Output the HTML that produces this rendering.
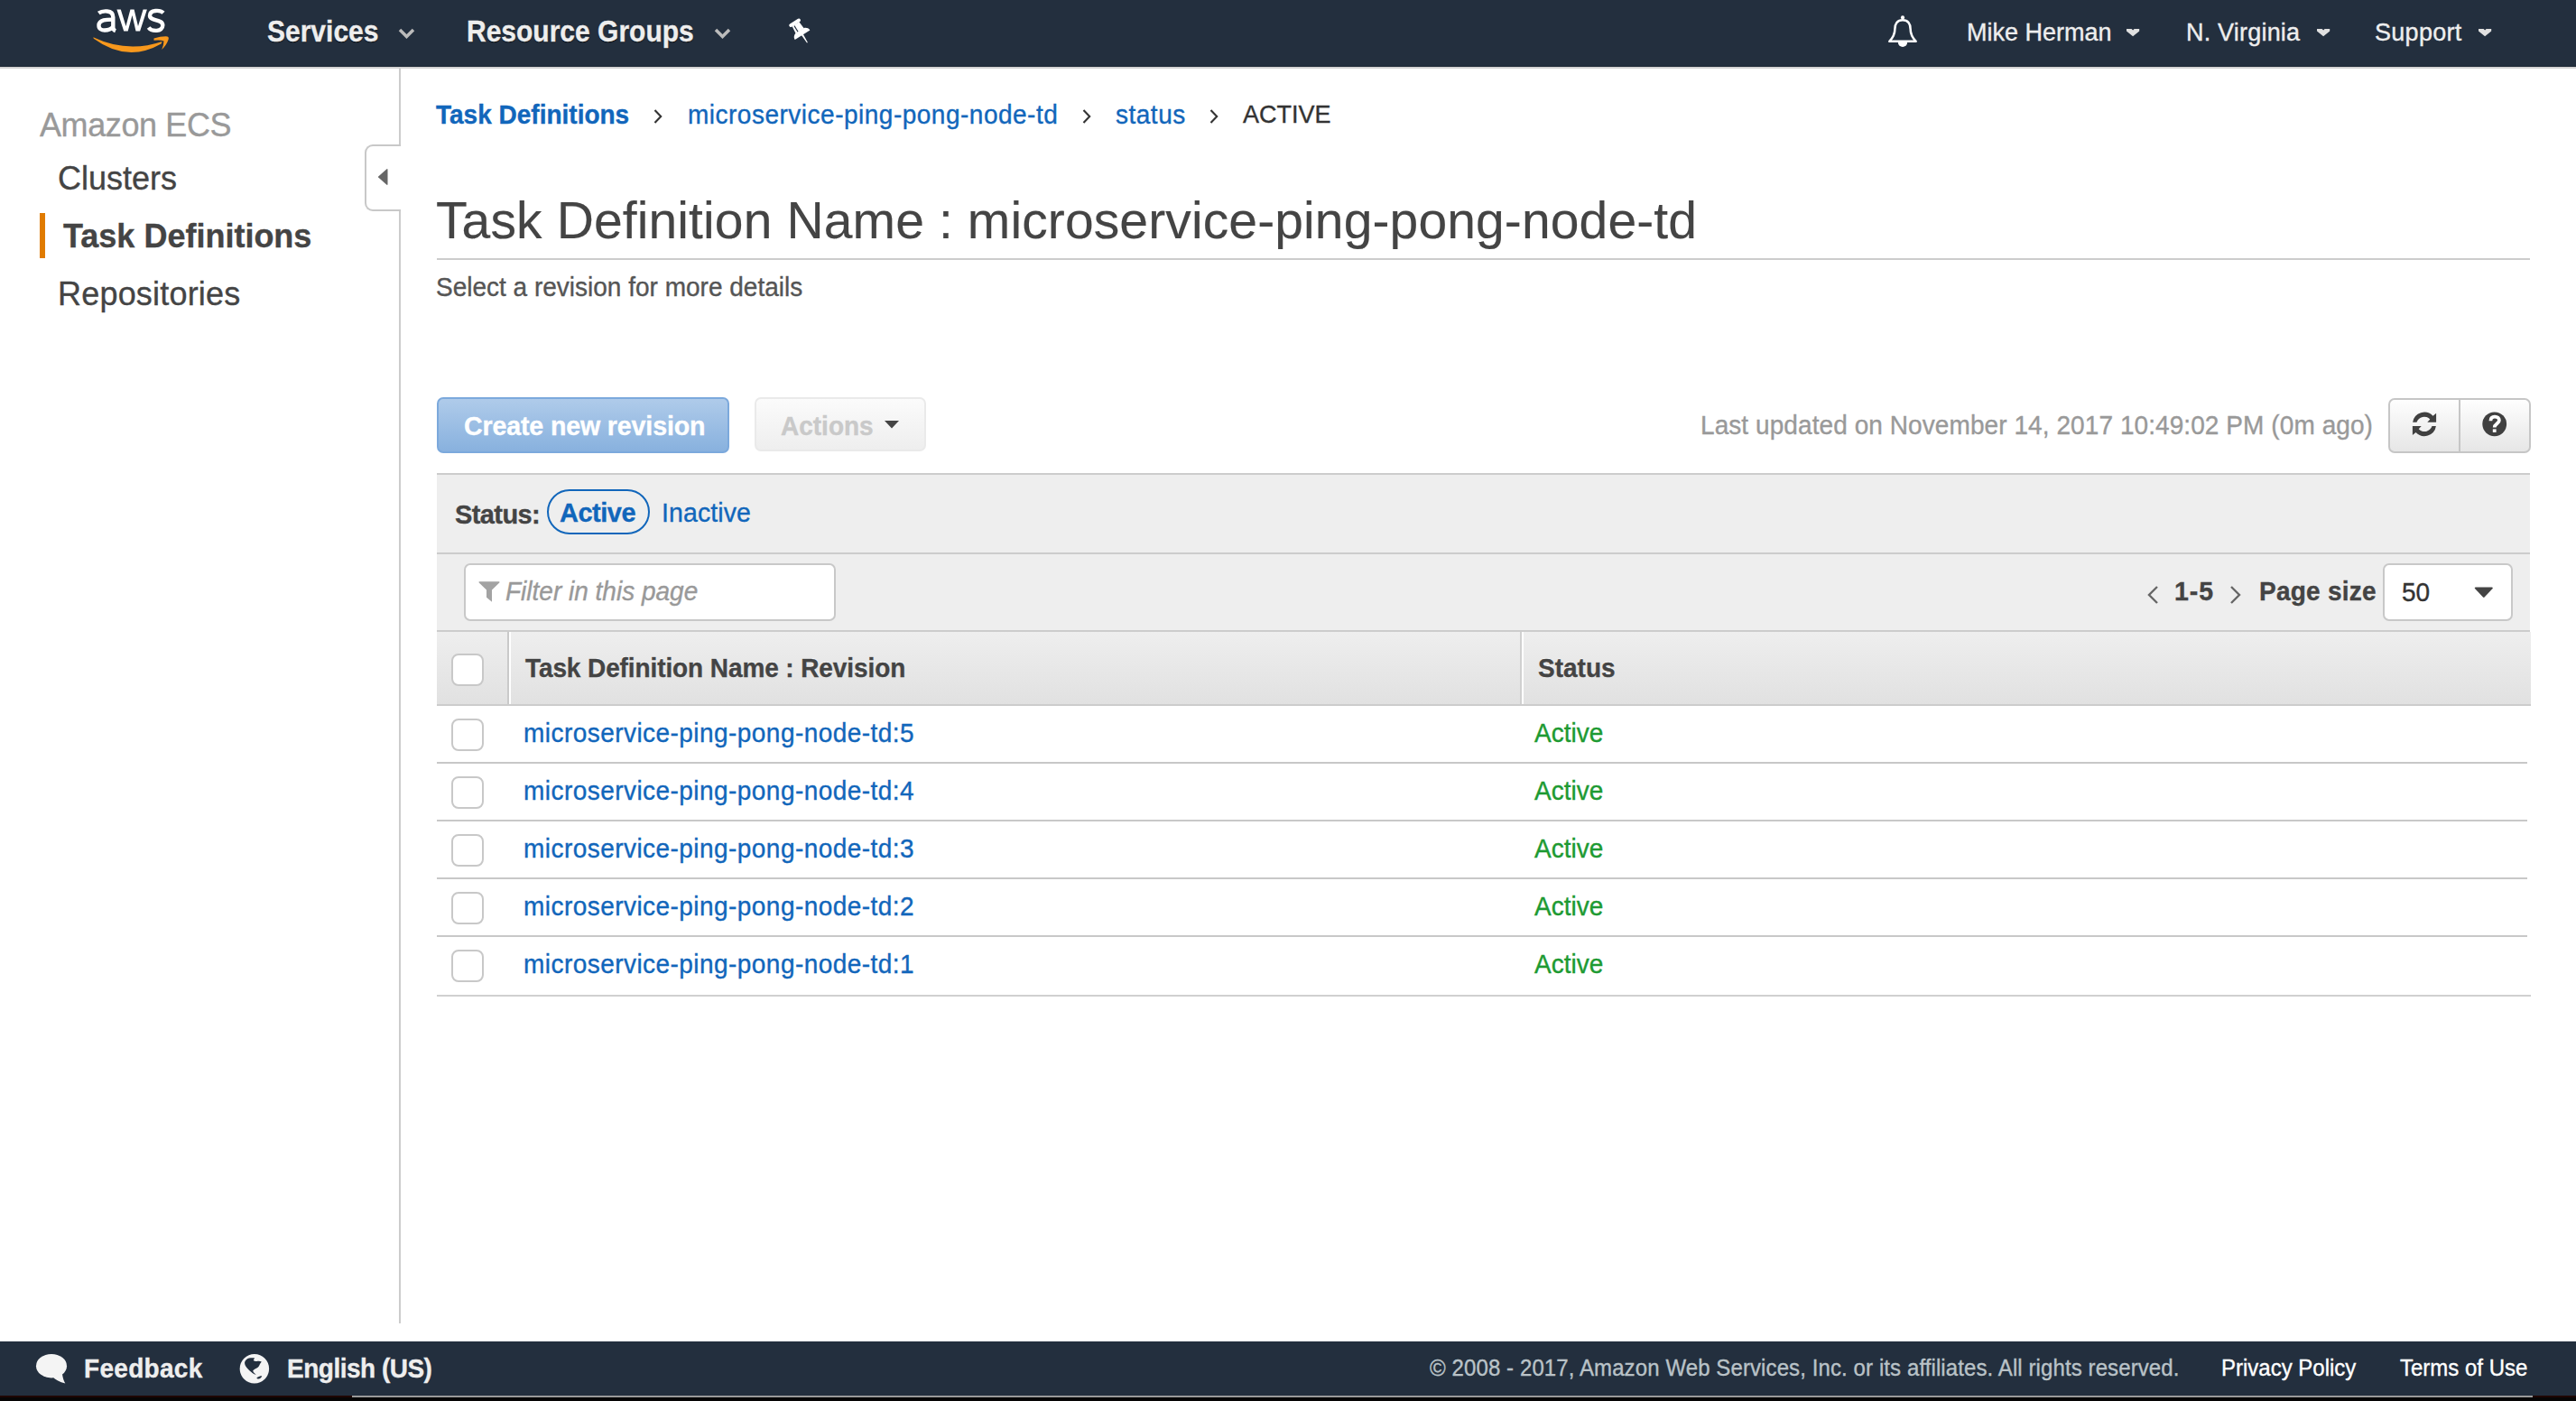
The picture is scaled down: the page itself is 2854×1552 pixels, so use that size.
<!DOCTYPE html>
<html>
<head>
<meta charset="utf-8">
<style>
*{box-sizing:border-box;margin:0;padding:0}
html,body{width:2854px;height:1552px;overflow:hidden;background:#fff}
body{position:relative;font-family:"Liberation Sans",sans-serif;color:#444}
.a{-webkit-text-stroke:0.35px currentColor}
.a{position:absolute;white-space:nowrap;line-height:1}
.b{font-weight:bold}
.s5{transform:scaleY(1.05);transform-origin:0 84.65%}
.s12{transform:scaleY(1.12);transform-origin:0 84.65%}
#hdr{position:absolute;left:0;top:0;width:2854px;height:74px;background:#232f3e;border-bottom:1px solid #1b2532}
#hdrline{position:absolute;left:0;top:74px;width:2854px;height:2px;background:#d2d2d2}
.nav{color:#eee;font-size:30px;font-weight:bold;text-shadow:0 1px 1px rgba(0,0,0,.9)}
.navr{color:#eee;font-size:27px}
#side{position:absolute;left:0;top:76px;width:444px;height:1390px;border-right:2px solid #ccc}
.sd{font-size:36px}
.bc{font-size:28px;color:#1166bb}
.chev{color:#444;font-size:28px}
#panel{position:absolute;left:484px;top:524px;width:2319px;height:176px;background:#eee;border-top:2px solid #ccc;border-bottom:2px solid #ccc}
#panelmid{position:absolute;left:484px;top:612px;width:2319px;height:2px;background:#ccc}
#thead{position:absolute;left:484px;top:700px;width:2320px;height:82px;background:linear-gradient(#eeeeee,#e1e1e1);border-bottom:2px solid #cccccc}
.cb{position:absolute;width:36px;height:36px;border:2px solid #c8c8c8;border-radius:8px;background:#fff}
.row{position:absolute;left:484px;width:2316px;height:64px;border-bottom:2px solid #ccc}
.lnk{font-size:28px;color:#1166bb;letter-spacing:0.45px}
.grn{font-size:28px;color:#1d9a32}
#ftr{position:absolute;left:0;top:1486px;width:2854px;height:60px;background:#232f3e}
#ftrstrip{position:absolute;left:0;top:1546px;width:2854px;height:6px;background:#060505}
#ftrline{position:absolute;left:0;top:1546px;width:2854px;height:2px;background:linear-gradient(to right,#1f0602 0,#1f0602 390px,#999 390px,#999 2806px,#1f0602 2806px)}
.ft{font-size:28px;color:#eee;font-weight:bold}
.fr{font-size:24px}
</style>
</head>
<body>
<div id="hdr"></div>
<div id="hdrline"></div>

<!-- header content -->
<svg class="a" style="left:96px;top:4px" width="100" height="60" viewBox="96 4 100 60">
  <g stroke="#fff" stroke-width="4.4" fill="none">
    <path d="M109.3 14.6 C113 11.8 125.3 10.2 125.3 19 L125.3 30.5 C125.3 32.5 126.3 33.5 128 34.2"/>
    <path d="M125.3 21.6 C119 21.6 109.5 21.4 109.5 28.4 C109.5 35.6 121.5 34.2 125.3 29.8"/>
    
    <path d="M181 14.3 C177.5 10.8 166 10.6 166 17.2 C166 24 180.3 20.8 180.3 28 C180.3 35.6 168 35.2 164.6 30.5"/>
  </g>
  <path d="M129.4 10.6 L133.8 10.6 L139.5 29 L144.4 10.6 L148.6 10.6 L153 29 L158.6 10.6 L162.9 10.6 L155.1 34.6 L150.5 34.6 L146.5 17 L141.7 34.6 L137.2 34.6 Z" fill="#fff"/>
  <path d="M103.3 41.3 Q141 59.1 179.6 46 L178.6 48.6 Q141 70.1 103.8 42.8 Z" fill="#f7981d"/>
  <path d="M170.5 42.4 Q179 40 185.5 40.4 Q187.5 41 186.5 44 Q184.5 50 179.2 55 Q181.5 49 181.5 45.5 Q178 44 170.5 44.8 Z" fill="#f7981d"/>
</svg>
<div class="s12 a nav" style="left:296px;top:21px">Services</div>
<svg class="a" style="left:441px;top:31px" width="19" height="12" viewBox="0 0 19 12"><path d="M2 2 L9.5 9.5 L17 2" stroke="#bbb" stroke-width="3.5" fill="none"/></svg>
<div class="s12 a nav" style="left:517px;top:21px">Resource Groups</div>
<svg class="a" style="left:791px;top:31px" width="19" height="12" viewBox="0 0 19 12"><path d="M2 2 L9.5 9.5 L17 2" stroke="#bbb" stroke-width="3.5" fill="none"/></svg>
<svg class="a" style="left:860px;top:10px" width="50" height="50" viewBox="860 10 50 50"><g transform="translate(879.6 23.6) rotate(-32)" fill="#fff">
<rect x="-7.2" y="0" width="14.4" height="3.8" rx="1.9"/>
<path d="M-4.6 3.5 L4.6 3.5 L5.4 12.6 L-5.4 12.6 Z"/>
<path d="M-5.6 12.2 L5.6 12.2 C8 13 9.8 15 9.8 17 L9.8 17.8 L-9.8 17.8 L-9.8 17 C-9.8 15 -8 13 -5.6 12.2 Z"/>
<path d="M-1.1 17.5 L1.1 17.5 L0.5 28 L-0.5 28 Z"/>
<rect x="-2.9" y="4.5" width="1.1" height="7.6" fill="#232f3e"/>
</g></svg>

<svg class="a" style="left:2091px;top:17px" width="34" height="36" viewBox="0 0 34 36"><path d="M17 5.2 C11 5.2 8.4 9.5 8.4 15 C8.4 21 6.5 24.5 2.3 28.8 L31.7 28.8 C27.5 24.5 25.6 21 25.6 15 C25.6 9.5 23 5.2 17 5.2 Z" stroke="#fff" stroke-width="2.5" fill="none" stroke-linejoin="round"/><path d="M11.9 30 L22.1 30 A5.1 5.1 0 0 1 11.9 30 Z" fill="#fff"/><circle cx="17" cy="2.4" r="2.1" fill="#fff"/></svg>
<div class="a navr" style="left:2179px;top:23px">Mike Herman</div>
<svg class="a" style="left:2354px;top:31px" width="17" height="10" viewBox="0 0 17 10"><path d="M2 1 L7.6 1 L9.1 2.6 L10.6 1 L16.2 1 L16.2 3.6 L9.1 9.2 L2 3.6 Z" fill="#e0e0e0"/></svg>
<div class="a navr" style="left:2422px;top:23px;letter-spacing:0.2px">N. Virginia</div>
<svg class="a" style="left:2565px;top:31px" width="17" height="10" viewBox="0 0 17 10"><path d="M2 1 L7.6 1 L9.1 2.6 L10.6 1 L16.2 1 L16.2 3.6 L9.1 9.2 L2 3.6 Z" fill="#e0e0e0"/></svg>
<div class="a navr" style="left:2631px;top:23px;letter-spacing:0.3px">Support</div>
<svg class="a" style="left:2744px;top:31px" width="17" height="10" viewBox="0 0 17 10"><path d="M2 1 L7.6 1 L9.1 2.6 L10.6 1 L16.2 1 L16.2 3.6 L9.1 9.2 L2 3.6 Z" fill="#e0e0e0"/></svg>

<!-- sidebar -->
<div id="side"></div>
<div class="a sd" style="left:44px;top:121px;color:#999;letter-spacing:-0.4px">Amazon ECS</div>
<div class="a sd" style="left:64px;top:180px;color:#444">Clusters</div>
<div class="a" style="left:44px;top:236px;width:6px;height:50px;background:#e07b00"></div>
<div class="a sd b" style="left:70px;top:244px;color:#444">Task Definitions</div>
<div class="a sd" style="left:64px;top:308px;color:#444;letter-spacing:0.2px">Repositories</div>
<div class="a" style="left:404px;top:160px;width:40px;height:74px;background:#fff;border:2px solid #c8c8c8;border-right:none;border-radius:9px 0 0 9px"></div>
<svg class="a" style="left:418px;top:186px" width="13" height="20" viewBox="0 0 13 20"><path d="M10.5 1.2 Q11.5 0.8 11.5 2 L11.5 18 Q11.5 19.2 10.5 18.8 L1.2 10.6 Q0.6 10 1.2 9.4 Z" fill="#666"/></svg>

<!-- breadcrumb -->
<div class="s5 a bc b" style="left:483px;top:114px">Task Definitions</div>
<svg class="a" style="left:722px;top:118px" width="14" height="22" viewBox="0 0 14 22"><path d="M3.5 4 L10.2 11 L3.5 18" stroke="#333" stroke-width="2.1" fill="none"/></svg>
<div class="s5 a bc" style="left:762px;top:114px;letter-spacing:0.5px">microservice-ping-pong-node-td</div>
<svg class="a" style="left:1197px;top:118px" width="14" height="22" viewBox="0 0 14 22"><path d="M3.5 4 L10.2 11 L3.5 18" stroke="#333" stroke-width="2.1" fill="none"/></svg>
<div class="s5 a bc" style="left:1236px;top:114px;letter-spacing:0.5px">status</div>
<svg class="a" style="left:1338px;top:118px" width="14" height="22" viewBox="0 0 14 22"><path d="M3.5 4 L10.2 11 L3.5 18" stroke="#333" stroke-width="2.1" fill="none"/></svg>
<div class="s5 a" style="left:1377px;top:114px;font-size:27px;color:#333">ACTIVE</div>

<!-- title -->
<div class="a" style="left:483px;top:216px;font-size:57px;color:#444;letter-spacing:0.12px;-webkit-text-stroke:0.15px #444">Task Definition Name : microservice-ping-pong-node-td</div>
<div class="a" style="left:484px;top:286px;width:2319px;height:2px;background:#ccc"></div>
<div class="s5 a" style="left:483px;top:305px;font-size:28px;color:#555">Select a revision for more details</div>

<!-- toolbar -->
<div class="a" style="left:484px;top:440px;width:324px;height:62px;border:2px solid #7ca9dc;border-radius:7px;background:linear-gradient(#afcbea,#88b1de)"></div>
<div class="s5 a b" style="left:514px;top:458px;font-size:28.6px;color:#fff;letter-spacing:-0.15px">Create new revision</div>
<div class="a" style="left:836px;top:440px;width:190px;height:60px;border:2px solid #eaeaea;border-radius:7px;background:linear-gradient(#fbfbfb,#eeeeee)"></div>
<div class="s5 a b" style="left:865px;top:459px;font-size:28px;color:#c9c9c9">Actions</div>
<svg class="a" style="left:980px;top:466px" width="16" height="9" viewBox="0 0 16 9"><path d="M0 0 L16 0 L8 8.5 Z" fill="#444"/></svg>

<div class="s5 a" style="left:1884px;top:458px;font-size:28px;color:#999;letter-spacing:0.075px">Last updated on November 14, 2017 10:49:02 PM (0m ago)</div>
<div class="a" style="left:2646px;top:441px;width:158px;height:61px;border:2px solid #c6c6c6;border-radius:7px;background:linear-gradient(#fefefe,#e6e6e6)"></div>
<div class="a" style="left:2724px;top:443px;width:2px;height:57px;background:#c6c6c6"></div>
<svg class="a" style="left:2660px;top:448px" width="130" height="47" viewBox="2660 448 130 47">
<path d="M2673.1 467.7 A13.1 13.1 0 0 1 2695.5 460.7 L2699.1 457.8 L2699.1 467.7 L2689.3 467.7 L2692.3 464.5 A8.8 8.8 0 0 0 2677.5 467.7 Z" fill="#404040"/>
<path d="M2698.9 472.1 A13.1 13.1 0 0 1 2676.5 479.1 L2672.9 482 L2672.9 472.1 L2682.7 472.1 L2679.7 475.3 A8.8 8.8 0 0 0 2694.5 472.1 Z" fill="#404040"/>
<circle cx="2763.7" cy="469.8" r="13.4" fill="#404040"/>
<path d="M2759.4 466.2 C2759.4 462.6 2761.5 461.6 2764 461.6 C2767 461.6 2768.9 463.3 2768.9 465.8 C2768.9 469.2 2763.7 469.6 2763.7 473.6" stroke="#fff" stroke-width="3.8" fill="none"/>
<rect x="2761.8" y="475.4" width="3.8" height="3.5" fill="#fff"/>
</svg>

<!-- panel -->
<div id="panel"></div>
<div id="panelmid"></div>
<div class="a b" style="left:504px;top:556px;font-size:29px;color:#444;letter-spacing:-0.6px">Status:</div>
<div class="a" style="left:606px;top:542px;width:114px;height:50px;border:2px solid #1166bb;border-radius:25px"></div>
<div class="a b" style="left:620px;top:554px;font-size:29px;color:#1166bb;letter-spacing:-0.5px">Active</div>
<div class="s5 a" style="left:733px;top:554px;font-size:28.5px;color:#1166bb;letter-spacing:0.1px">Inactive</div>

<div class="a" style="left:514px;top:624px;width:412px;height:64px;border:2px solid #c8c8c8;border-radius:7px;background:#fff"></div>
<svg class="a" style="left:530px;top:644px" width="24" height="23" viewBox="0 0 24 23"><path d="M1 0.2 L23 0.2 Q24 0.5 23.3 1.4 L15 9.4 L15 22.8 L9 17.8 L9 9.4 L0.7 1.4 Q0 0.5 1 0.2 Z" fill="#a3a3a3"/></svg>
<div class="s5 a" style="left:560px;top:642px;font-size:28px;color:#999;font-style:italic">Filter in this page</div>

<svg class="a" style="left:2377px;top:648px" width="16" height="22" viewBox="0 0 16 22"><path d="M13 2 L4 11 L13 20" stroke="#666" stroke-width="2.4" fill="none"/></svg>
<div class="s5 a b" style="left:2409px;top:641px;font-size:28.5px;color:#444;letter-spacing:1px">1-5</div>
<svg class="a" style="left:2469px;top:648px" width="16" height="22" viewBox="0 0 16 22"><path d="M3 2 L12 11 L3 20" stroke="#666" stroke-width="2.4" fill="none"/></svg>
<div class="s5 a b" style="left:2503px;top:642px;font-size:28px;color:#444;letter-spacing:0.25px">Page size</div>
<div class="a" style="left:2640px;top:624px;width:144px;height:64px;border:2px solid #c8c8c8;border-radius:7px;background:#fff"></div>
<div class="s5 a" style="left:2661px;top:643px;font-size:28px;color:#333">50</div>
<svg class="a" style="left:2741px;top:650px" width="22" height="13" viewBox="0 0 22 13"><path d="M1.8 0.6 L19.8 0.6 Q21.6 0.8 20.6 2 L11.6 11.6 Q10.8 12.3 10 11.6 L1 2 Q0 0.8 1.8 0.6 Z" fill="#444"/></svg>

<!-- table -->
<div id="thead"></div>
<div class="a" style="left:562px;top:700px;width:2px;height:80px;background:#c9c9c9"></div>
<div class="a" style="left:564px;top:700px;width:2px;height:80px;background:#fff"></div>
<div class="a" style="left:1684px;top:700px;width:2px;height:80px;background:#d0d0d0"></div>
<div class="a" style="left:1686px;top:700px;width:2px;height:80px;background:#fff"></div>
<div class="cb" style="left:500px;top:724px"></div>
<div class="s5 a b" style="left:582px;top:727px;font-size:28px;color:#444;text-shadow:0 -1px 0 #fff;letter-spacing:-0.1px">Task Definition Name : Revision</div>
<div class="s5 a b" style="left:1704px;top:727px;font-size:28px;color:#444;text-shadow:0 -1px 0 #fff">Status</div>
<div class="a" style="left:484px;top:844px;width:2316px;height:2px;background:#c8c8c8"></div>
<div class="a" style="left:484px;top:908px;width:2316px;height:2px;background:#c8c8c8"></div>
<div class="a" style="left:484px;top:972px;width:2316px;height:2px;background:#c8c8c8"></div>
<div class="a" style="left:484px;top:1036px;width:2316px;height:2px;background:#c8c8c8"></div>
<div class="a" style="left:484px;top:1102px;width:2320px;height:2px;background:#d0d0d0"></div>
<div class="cb" style="left:500px;top:796px"></div>
<div class="s5 a lnk" style="left:580px;top:799px">microservice-ping-pong-node-td:5</div>
<div class="s5 a grn" style="left:1700px;top:799px">Active</div>
<div class="cb" style="left:500px;top:860px"></div>
<div class="s5 a lnk" style="left:580px;top:863px">microservice-ping-pong-node-td:4</div>
<div class="s5 a grn" style="left:1700px;top:863px">Active</div>
<div class="cb" style="left:500px;top:924px"></div>
<div class="s5 a lnk" style="left:580px;top:927px">microservice-ping-pong-node-td:3</div>
<div class="s5 a grn" style="left:1700px;top:927px">Active</div>
<div class="cb" style="left:500px;top:988px"></div>
<div class="s5 a lnk" style="left:580px;top:991px">microservice-ping-pong-node-td:2</div>
<div class="s5 a grn" style="left:1700px;top:991px">Active</div>
<div class="cb" style="left:500px;top:1052px"></div>
<div class="s5 a lnk" style="left:580px;top:1055px">microservice-ping-pong-node-td:1</div>
<div class="s5 a grn" style="left:1700px;top:1055px">Active</div>

<!-- footer -->
<div id="ftr"></div>
<div id="ftrstrip"></div>
<div id="ftrline"></div>
<svg class="a" style="left:30px;top:1490px" width="50" height="50" viewBox="30 1490 50 50"><ellipse cx="57" cy="1513.2" rx="17" ry="13.2" fill="#f4f4f4"/><path d="M58 1525 L69 1522 C69.5 1526 70.5 1529.5 72.3 1532.6 C66 1531 61.5 1528.5 58 1525 Z" fill="#f4f4f4"/></svg>
<div class="s5 a ft" style="left:93px;top:1503px;letter-spacing:0.3px">Feedback</div>
<svg class="a" style="left:255px;top:1490px" width="60" height="50" viewBox="255 1490 60 50"><circle cx="281.9" cy="1516.2" r="16.2" fill="#f4f4f4"/><path d="M271.1 1508.9 C272 1506.5 274 1505 276 1504.6 C278 1504.2 280.5 1504 282.1 1504.6 L280.7 1507.1 C282 1508 283 1508.3 284.5 1508 C286.5 1507.6 288.5 1507.8 289.8 1508.6 C288.8 1510 288 1511 287.8 1511.6 C287 1513.5 286.3 1514.5 285.3 1515 C284 1515.7 281 1517 280.2 1518.4 C280.4 1519.6 282 1521.5 283.8 1522.6 C281.5 1522.6 280 1521.5 278.5 1520 C276 1518 273.5 1515.5 272.1 1513.2 C271.4 1512 271 1510.5 271.1 1508.9 Z" fill="#232f3e"/><path d="M284.3 1526.8 C285 1525.2 288 1524.2 290.2 1524.2 C289.8 1526 288 1527.4 286.3 1527.6 C285.5 1527.6 284.6 1527.3 284.3 1526.8 Z" fill="#232f3e"/></svg>
<div class="s5 a ft" style="left:318px;top:1503px;letter-spacing:-0.5px">English (US)</div>
<div class="s5 a fr" style="left:1584px;top:1504px;color:#b9c2c7;letter-spacing:0.1px">&copy; 2008 - 2017, Amazon Web Services, Inc. or its affiliates. All rights reserved.</div>
<div class="s5 a fr" style="left:2461px;top:1504px;color:#fff">Privacy Policy</div>
<div class="s5 a fr" style="left:2659px;top:1504px;color:#fff">Terms of Use</div>
</body>
</html>
